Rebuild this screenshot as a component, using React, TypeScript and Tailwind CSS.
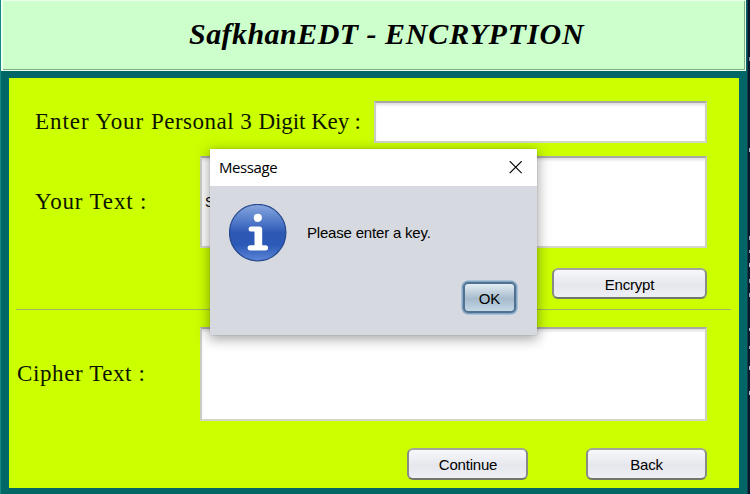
import type { ReactNode } from "react";

function Label({ children, className }: { children: ReactNode; className: string }) {
  return (
    <span className={`block shrink-0 whitespace-pre font-['Liberation_Serif',serif] text-[23px] leading-[26px] text-[#0c1400] ${className}`}>
      {children}
    </span>
  );
}

function Field({ className, children }: { className: string; children?: ReactNode }) {
  return (
    <div className={`shrink-0 border-2 border-t-[#a8a9a4] border-r-[#cdd0bc] border-b-[#d3d6c8] border-l-[#c9ccc0] bg-white shadow-[inset_0_3px_3px_-1px_#dedee2] ${className}`}>
      {children}
    </div>
  );
}

function Button({ className, children }: { className: string; children: ReactNode }) {
  return (
    <button className={`flex shrink-0 items-center justify-center rounded-[6px] border-2 border-t-[#a2a59b] border-r-[#898b88] border-b-[#72776e] border-l-[#898b88] bg-linear-to-b from-[#f8f8fb] via-[#e5e7ed] via-55% to-[#eeeff5] font-['Liberation_Sans',sans-serif] text-[15px] leading-none tracking-[-0.2px] text-black ${className}`}>
      {children}
    </button>
  );
}

function InfoIcon() {
  return (
    <svg width="58" height="58" viewBox="0 0 58 58" aria-hidden="true">
      <defs>
        <linearGradient id="infoDisc" x1="0" y1="0" x2="0" y2="1">
          <stop offset="0" stopColor="#88a7de" />
          <stop offset="0.36" stopColor="#4671c4" />
          <stop offset="0.5" stopColor="#2d59b4" />
          <stop offset="0.72" stopColor="#2b59b6" />
          <stop offset="1" stopColor="#5c86d7" />
        </linearGradient>
      </defs>
      <circle cx="28.7" cy="28.6" r="28.2" fill="url(#infoDisc)" stroke="#26488f" strokeWidth="1.2" />
      <circle cx="28.8" cy="13.8" r="4.1" fill="#fff" />
      <path d="M22.2 25H30.5V43.8M21.2 43.8H36.5" fill="none" stroke="#fff" strokeWidth="5.2" strokeLinecap="round" strokeLinejoin="round" />
      <path d="M25.5 25H33.1V44H25.5Z" fill="#fff" />
    </svg>
  );
}

function MessageDialog() {
  return (
    <div role="dialog" className="absolute top-[149px] left-[210px] flex h-[186px] w-[327px] flex-col bg-[#d6d9df] font-['Liberation_Sans',sans-serif] shadow-[0_3px_12px_1px_rgba(0,0,0,0.36),0_0_1px_rgba(0,0,0,0.25)]">
      <div className="flex h-[37px] shrink-0 items-center justify-between bg-white pr-[15px] pl-[9px]">
        <span className="font-['Open_Sans',sans-serif] text-[15px] tracking-[-0.4px] text-black">Message</span>
        <svg width="13" height="13" viewBox="0 0 13 13" aria-hidden="true">
          <path d="M0.7 0.2L12.7 12.2M12.7 0.2L0.7 12.2" stroke="#000" strokeWidth="1.2" />
        </svg>
      </div>
      <div className="flex items-center gap-[20px] pt-[18px] pl-[19px]">
        <InfoIcon />
        <span className="text-[15px] tracking-[-0.19px] text-black">Please enter a key.</span>
      </div>
      <div className="flex justify-end pt-[20px] pr-[21px]">
        <button className="flex h-[31px] w-[53px] items-center justify-center rounded-[5px] border-2 border-[#50718f] bg-linear-to-b from-[#e4edf3] via-[#a5bacc] via-55% to-[#c4d8e5] pt-px text-[15px] leading-none text-black shadow-[0_0_0_1.5px_#82a8c9]">
          OK
        </button>
      </div>
    </div>
  );
}

export default function App() {
  return (
    <div className="relative flex h-[494px] w-[750px] overflow-hidden bg-[#006666]">
      <div className="w-px shrink-0 bg-[#168785]" />
      <main className="w-[746px] shrink-0">
        <header className="h-[71px] w-[745px] border-t border-r border-b border-l-2 border-t-[#eaffea] border-r-[#e7f8e7] border-b-[#e7ffe7] border-l-[#edffed] bg-[#ccffcc]">
          <div className="flex h-[69px] items-center border-r border-b border-[#81af84] pl-[186px]">
            <h1 className="whitespace-pre pb-[2px] font-['Liberation_Serif',serif] text-[30px] leading-[34px] font-bold tracking-[0.45px] text-black italic">
              <span>SafkhanEDT - </span>
              <span className="tracking-[0.85px]">ENCRYPTION</span>
            </h1>
          </div>
        </header>
        <section className="mt-[7px] ml-[8px] h-[410px] w-[730px] bg-[#ccff00] pt-[23px]">
          <div className="flex items-center justify-between pr-[32px] pl-[26px]">
            <Label className="w-[330px] tracking-[0.95px]">
              <span>Enter Your </span>
              <span className="tracking-[0.5px]">Personal </span>
              <span className="tracking-[0.4px]">3 </span>
              <span className="tracking-[-0.05px]">Digit </span>
              <span className="tracking-[-0.15px]">Key :</span>
            </Label>
            <Field className="h-[42px] w-[333px]" />
          </div>
          <div className="mt-[13px] flex items-center justify-between pr-[32px] pl-[26px]">
            <Label className="tracking-[0.85px]">Your Text :</Label>
            <Field className="flex h-[92px] w-[507px] items-center pl-[3px]">
              <span className="font-['Liberation_Sans',sans-serif] text-[14px] text-black">S</span>
            </Field>
          </div>
          <div className="mt-[20px] flex justify-end pr-[32px]">
            <Button className="h-[31px] w-[155px] pt-[2px]">Encrypt</Button>
          </div>
          <div className="mt-[10px] mr-[8px] ml-[7px] h-px bg-[#a4b45c]" />
          <div className="mt-[17px] flex items-center justify-between pr-[32px] pl-[8px]">
            <Label className="pb-px tracking-[0.6px]">Cipher Text :</Label>
            <Field className="h-[94px] w-[507px]" />
          </div>
          <div className="mt-[27px] flex justify-end gap-[58px] pr-[32px]">
            <Button className="h-[32px] w-[121px] pl-px">Continue</Button>
            <Button className="h-[32px] w-[121px]">Back</Button>
          </div>
        </section>
      </main>
      <div className="w-px shrink-0 bg-[#153c48]" />
      <div className="flex grow flex-col bg-[#07182c] pt-[57px]">
        <div className="ml-px h-[4px] bg-[#8999ae]" />
        <div className="mt-[87px] ml-px h-[4px] bg-[#a6b7c7]" />
        <div className="mt-[84px] ml-px h-[4px] bg-[#91a9bd]" />
        <div className="mt-[10px] ml-px h-[3px] bg-[#8ba0b4]" />
        <div className="mt-[10px] ml-px h-[4px] bg-[#b3c8d5]" />
        <div className="mt-[12px] ml-px h-[4px] bg-[#87a3b9]" />
        <div className="mt-[10px] ml-px h-[4px] bg-[#91a9bd]" />
        <div className="mt-[31px] ml-px h-[3px] bg-[#a5bbcc]" />
        <div className="mt-[15px] ml-px h-[3px] bg-[#91a9bd]" />
        <div className="mt-[17px] ml-px h-[4px] bg-[#a5bbcc]" />
        <div className="mt-[21px] ml-px h-[4px] bg-[#b1c3d0]" />
      </div>
      <MessageDialog />
    </div>
  );
}
